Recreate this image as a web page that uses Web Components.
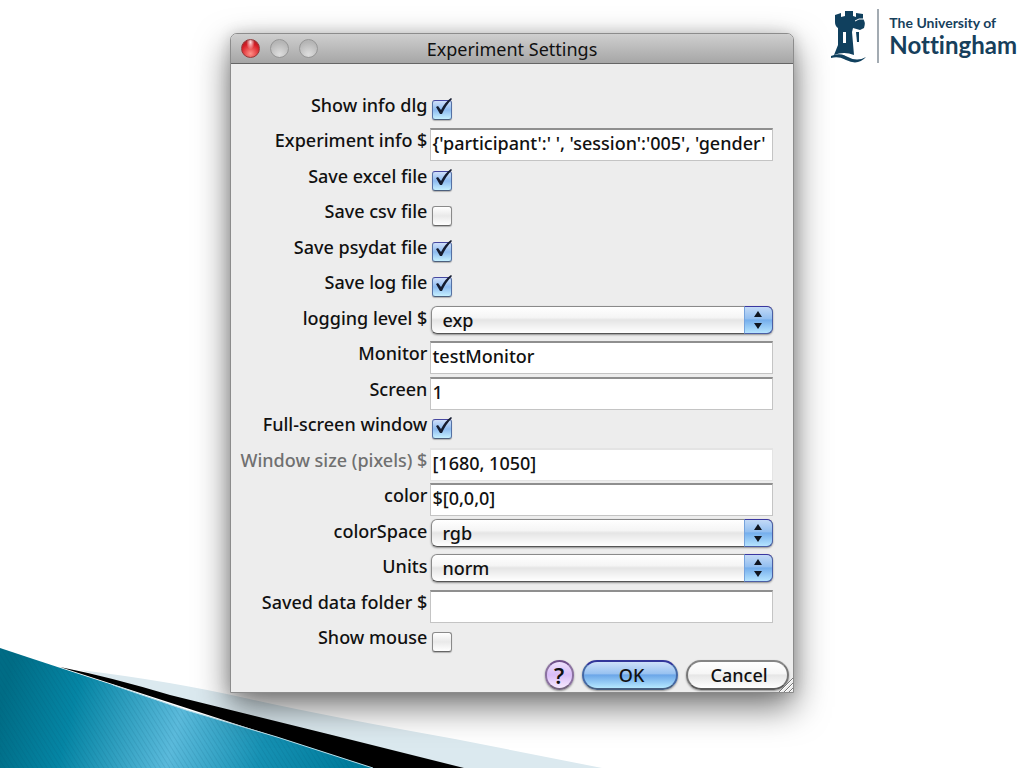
<!DOCTYPE html>
<html lang="en">
<head>
<meta charset="utf-8">
<title>Experiment Settings</title>
<style>
    body {
        margin: 0;
        background: #fff;
        font-family: "Noto Sans", sans-serif;
        font-weight: 500;
        color: #111;
    }
</style>
</head>
<body>

<slide-page>
    <university-logo slot="logo"></university-logo>
    <settings-dialog heading="Experiment Settings">
        <settings-check label="Show info dlg" checked></settings-check>
        <settings-text label="Experiment info $" value="{'participant':' ', 'session':'005', 'gender'"></settings-text>
        <settings-check label="Save excel file" checked></settings-check>
        <settings-check label="Save csv file"></settings-check>
        <settings-check label="Save psydat file" checked></settings-check>
        <settings-check label="Save log file" checked></settings-check>
        <settings-choice label="logging level $" options="exp"></settings-choice>
        <settings-text label="Monitor" value="testMonitor"></settings-text>
        <settings-text label="Screen" value="1"></settings-text>
        <settings-check label="Full-screen window" checked></settings-check>
        <settings-text label="Window size (pixels) $" value="[1680, 1050]" inactive></settings-text>
        <settings-text label="color" value="$[0,0,0]"></settings-text>
        <settings-choice label="colorSpace" options="rgb"></settings-choice>
        <settings-choice label="Units" options="norm"></settings-choice>
        <settings-text label="Saved data folder $" value=""></settings-text>
        <settings-check label="Show mouse"></settings-check>
        <aqua-button slot="actions" kind="help">?</aqua-button>
        <aqua-button slot="actions" kind="primary">OK</aqua-button>
        <aqua-button slot="actions" kind="plain">Cancel</aqua-button>
    </settings-dialog>
</slide-page>

<script>
class SlidePage extends HTMLElement {

    constructor() {
        super();
        this.attachShadow({ mode: 'open' });
        this.shadowRoot.innerHTML = `
            <style>
                :host {
                    display: block;
                    position: relative;
                    min-height: 100vh;
                    box-sizing: border-box;
                    padding-top: 33px;
                    overflow: hidden;
                }
                .wave {
                    position: absolute;
                    left: 0;
                    bottom: 0;
                    width: 100%;
                    height: auto;
                }
                .logo {
                    position: absolute;
                    top: 9px;
                    right: 7px;
                }
            </style>
            <svg class="wave" viewBox="0 0 1024 120" aria-hidden="true">
                <defs>
                    <linearGradient id="sea" gradientUnits="userSpaceOnUse" x1="0" y1="60" x2="340" y2="150">
                        <stop offset="0" stop-color="#006c85"/>
                        <stop offset=".2" stop-color="#0585a4"/>
                        <stop offset=".5" stop-color="#5bbadb"/>
                        <stop offset=".75" stop-color="#1691b3"/>
                        <stop offset="1" stop-color="#007c9c"/>
                    </linearGradient>
                    <pattern id="lines" width="4" height="4" patternUnits="userSpaceOnUse" patternTransform="rotate(-32)">
                        <path d="M0 0V4" stroke="#004f70" stroke-opacity=".12" stroke-width="2"/>
                    </pattern>
                </defs>
                <path d="M80 22 Q170 33 245 50 T455 91 L602 120 H400Z" fill="#dbe9ef"/>
                <path d="M60 19 Q110 29 170 47 L336 88 L464 120 H372Z" fill="#000"/>
                <path d="M0 0 Q60 20 113 37 L186 62 L277 89 L373 120 H0Z" fill="url(#sea)"/>
                <path d="M0 0 Q60 20 113 37 L186 62 L277 89 L373 120 H0Z" fill="url(#lines)"/>
                <path d="M113 37 L186 62 L277 89 L373 120" fill="none" stroke="#b7dde8"/>
            </svg>
            <slot></slot>
            <div class="logo"><slot name="logo"></slot></div>
        `;
    }

}

class UniversityLogo extends HTMLElement {

    constructor() {
        super();
        this.attachShadow({ mode: 'open' });
        this.shadowRoot.innerHTML = `
            <style>
                :host {
                    display: flex;
                    gap: 10px;
                    color: #173f5c;
                    font-family: Lato, sans-serif;
                    font-weight: 700;
                    font-variant-ligatures: none;
                }
                .words {
                    border-left: 2px solid #a3abb2;
                    padding: 4px 0 0 10px;
                }
                .small {
                    font-size: 14px;
                    line-height: 20px;
                }
                .big {
                    font-size: 24px;
                    line-height: 24px;
                }
            </style>
            <svg width="36" height="54" viewBox="0 0 36 54" fill="#10405e" aria-hidden="true">
                <path d="M4 6L10 4V8L14 7V2H22V7L25 8V4L32 5V10Q35 13 33 19L29 21L22 19L21 23L23 46Q13 42 3 46L7 36V19Q4 17 4 13Z"/>
                <path d="M25 23h3v10h-2z"/>
                <path d="M0 47Q9 43 17 48Q26 53 35 48Q27 57 15 51Q8 47 0 49Z"/>
                <path d="M12 23h3v11h-3z" fill="#fff"/>
                <path d="M24 12Q28 9 32 10" fill="none" stroke="#fff"/>
            </svg>
            <div class="words">
                <div class="small">The University of</div>
                <div class="big">Nottingham</div>
            </div>
        `;
    }

}

class SettingsDialog extends HTMLElement {

    constructor() {
        super();
        this.attachShadow({ mode: 'open' });
        this.shadowRoot.innerHTML = `
            <style>
                :host {
                    display: flex;
                    flex-direction: column;
                    position: relative;
                    box-sizing: border-box;
                    width: 55vw;
                    min-width: 500px;
                    min-height: 86vh;
                    margin: 0 auto;
                    border: 1px solid #8c8c8c;
                    border-radius: 7px 7px 0 0;
                    background: #ededed;
                    box-shadow: 0 14px 34px rgba(0, 0, 0, .55), 0 0 14px rgba(0, 0, 0, .15);
                }
                header {
                    display: grid;
                    grid-template-columns: 1fr auto 1fr;
                    align-items: center;
                    height: 29px;
                    border-bottom: 1px solid #656565;
                    border-radius: 6px 6px 0 0;
                    background: linear-gradient(#cfcfcf, #a6a6a6);
                }
                .lights {
                    display: flex;
                    gap: 10px;
                    padding-left: 10px;
                }
                .lights button {
                    width: 19px;
                    height: 19px;
                    padding: 0;
                    border: 1px solid #969696;
                    border-radius: 50%;
                    background: radial-gradient(circle at 50% 85%, #dedede, #b5b5b5 75%);
                }
                .lights .close {
                    border-color: #963a3a;
                    background:
                        radial-gradient(ellipse at 50% 14%, #ffe0e0, rgba(255, 255, 255, 0) 35%),
                        radial-gradient(circle at 50% 80%, #ff9087, #d81f27 60%, #8d1a20);
                }
                h1 {
                    margin: 0;
                    font-size: 18px;
                    font-weight: 400;
                    line-height: 24px;
                }
                form {
                    display: flex;
                    flex-direction: column;
                    flex: 1;
                }
                .rows {
                    display: grid;
                    grid-auto-rows: 1fr;
                    flex: 1;
                    padding: 29px 20px 0 0;
                }
                footer {
                    display: flex;
                    justify-content: flex-end;
                    gap: 8px;
                    padding: 0 4px 2px;
                }
                .grip {
                    position: absolute;
                    right: 0;
                    bottom: 0;
                }
            </style>
            <header>
                <div class="lights">
                    <button class="close" aria-label="Close"></button>
                    <button aria-label="Minimize"></button>
                    <button aria-label="Zoom"></button>
                </div>
                <h1></h1>
            </header>
            <form>
                <div class="rows"><slot></slot></div>
                <footer><slot name="actions"></slot></footer>
            </form>
            <svg class="grip" width="15" height="15" viewBox="0 0 15 15" aria-hidden="true">
                <path d="M1 15L15 1V15Z" fill="#ededed"/>
                <path d="M1 15L15 1M6 15L15 6M11 15L15 11" stroke="#777"/>
                <path d="M2 15L15 2M7 15L15 7M12 15L15 12" stroke="#fff"/>
            </svg>
        `;
    }

    connectedCallback() {
        this.shadowRoot.querySelector('h1').textContent = this.getAttribute('heading');
    }

}

// Base row: a right aligned label and the control of the subclass
class SettingsRow extends HTMLElement {

    connectedCallback() {
        if (this.shadowRoot) {
            return;
        }
        this.attachShadow({ mode: 'open' });
        this.shadowRoot.innerHTML = `
            <style>
                :host {
                    display: grid;
                    grid-template-columns: 196px 1fr;
                    column-gap: 3px;
                    align-items: start;
                }
                label {
                    font-size: 18px;
                    line-height: 24px;
                    text-align: right;
                    white-space: nowrap;
                }
                :host([inactive]) label {
                    color: #707070;
                }
                ${this.styles()}
            </style>
            <label for="control"></label>
            ${this.control()}
        `;
        this.shadowRoot.querySelector('label').textContent = this.getAttribute('label');
        this.setup(this.shadowRoot.querySelector('#control'));
    }

}

class SettingsText extends SettingsRow {

    styles() {
        return `
            input {
                box-sizing: border-box;
                width: 100%;
                height: 33px;
                padding: 0 1px 4px;
                border: 1px solid #c4c4c4;
                border-top: 2px solid #8f8f8f;
                border-radius: 0;
                background: #fff;
                color: #111;
                font: 500 18px "Noto Sans", sans-serif;
                outline: none;
            }
            :host([inactive]) input {
                border-color: #e4e4e4;
            }
        `;
    }

    control() {
        return '<input id="control" type="text">';
    }

    setup(input) {
        input.value = this.getAttribute('value');
    }

}

class SettingsCheck extends SettingsRow {

    styles() {
        return `
            .box {
                position: relative;
                width: 20px;
                height: 20px;
                margin: 7px 0 0 2px;
            }
            input {
                appearance: none;
                display: block;
                box-sizing: border-box;
                width: 20px;
                height: 20px;
                margin: 0;
                border: 1px solid #8a8a8a;
                border-bottom-color: #666;
                border-radius: 3px;
                background: linear-gradient(#fff, #e9e9e9 50%, #fff);
                box-shadow: 0 1px 1px rgba(0, 0, 0, .25);
            }
            input:checked {
                border-color: #4648a0 #5571a4 #4c5f7c;
                background: linear-gradient(#cfdffa, #8dbbf0 50%, #c5f0ff);
            }
            svg {
                position: absolute;
                left: 0;
                top: -3px;
                pointer-events: none;
            }
            input:not(:checked) + svg {
                display: none;
            }
        `;
    }

    control() {
        return `
            <div class="box">
                <input id="control" type="checkbox">
                <svg width="22" height="20" viewBox="0 0 22 20" aria-hidden="true">
                    <path d="M4 10L6 9L9 13Q13 5 19 1L20 2Q14 8 10 17H8Z" fill="#151c30"/>
                </svg>
            </div>
        `;
    }

    setup(input) {
        input.checked = this.hasAttribute('checked');
    }

}

class SettingsChoice extends SettingsRow {

    styles() {
        return `
            .box {
                position: relative;
                margin-left: 1px;
            }
            select {
                appearance: none;
                display: block;
                box-sizing: border-box;
                width: 100%;
                height: 28px;
                padding: 0 36px 0 10px;
                border: 1px solid #8a8a8a;
                border-bottom-color: #555;
                border-radius: 6px;
                background: linear-gradient(#fff, #f5f5f5 40%, #e5e5e5 50%, #fff);
                box-shadow: 0 1px 2px rgba(0, 0, 0, .4);
                color: #111;
                font: 500 18px "Noto Sans", sans-serif;
            }
            .arrows {
                position: absolute;
                top: 0;
                right: 0;
                bottom: 0;
                display: grid;
                place-items: center;
                box-sizing: border-box;
                width: 29px;
                border: 1px solid #4b5fa5;
                border-top-color: #3a37a0;
                border-left-color: #76a3dc;
                border-radius: 0 6px 6px 0;
                background: linear-gradient(#c3daf7, #93bff0 45%, #75aeec 50%, #b5e4ff);
                pointer-events: none;
            }
        `;
    }

    control() {
        return `
            <div class="box">
                <select id="control"></select>
                <div class="arrows">
                    <svg width="8" height="18" viewBox="0 0 8 18" fill="#10151f" aria-hidden="true">
                        <path d="M4 0L8 6H0Z"/>
                        <path d="M4 18L8 12H0Z"/>
                    </svg>
                </div>
            </div>
        `;
    }

    setup(select) {
        this.getAttribute('options').split(',').forEach(name => select.add(new Option(name)));
    }

}

class AquaButton extends HTMLElement {

    constructor() {
        super();
        this.attachShadow({ mode: 'open' });
        this.shadowRoot.innerHTML = `
            <style>
                :host {
                    display: block;
                }
                button {
                    display: block;
                    box-sizing: border-box;
                    min-width: 96px;
                    height: 30px;
                    padding: 0 19px 0 23px;
                    border: 2px solid #777;
                    border-color: #858585 #777 #5c5c5c;
                    border-radius: 15px;
                    background: linear-gradient(#fff, #f6f6f6 45%, #e6e6e6 50%, #fff);
                    box-shadow: 0 1px 2px rgba(0, 0, 0, .4);
                    color: #111;
                    font: 500 18px "Noto Sans", sans-serif;
                    line-height: 24px;
                }
                :host([kind="primary"]) button {
                    border-color: #32369a #4468a5 #475f80;
                    background: linear-gradient(#cde0f9, #98c2f1 45%, #6ba6e8 50%, #b5e8ff);
                }
                :host([kind="help"]) button {
                    min-width: 29px;
                    padding: 0;
                    border-color: #70508a #8b72a0 #75677f;
                    background: linear-gradient(#eee0fc, #d9bdf8 50%, #f7eaff);
                    font-size: 22px;
                    font-weight: 600;
                }
            </style>
            <button type="button"><slot></slot></button>
        `;
    }

}

customElements.define('slide-page', SlidePage);
customElements.define('university-logo', UniversityLogo);
customElements.define('settings-dialog', SettingsDialog);
customElements.define('settings-text', SettingsText);
customElements.define('settings-check', SettingsCheck);
customElements.define('settings-choice', SettingsChoice);
customElements.define('aqua-button', AquaButton);
</script>
</body>
</html>
